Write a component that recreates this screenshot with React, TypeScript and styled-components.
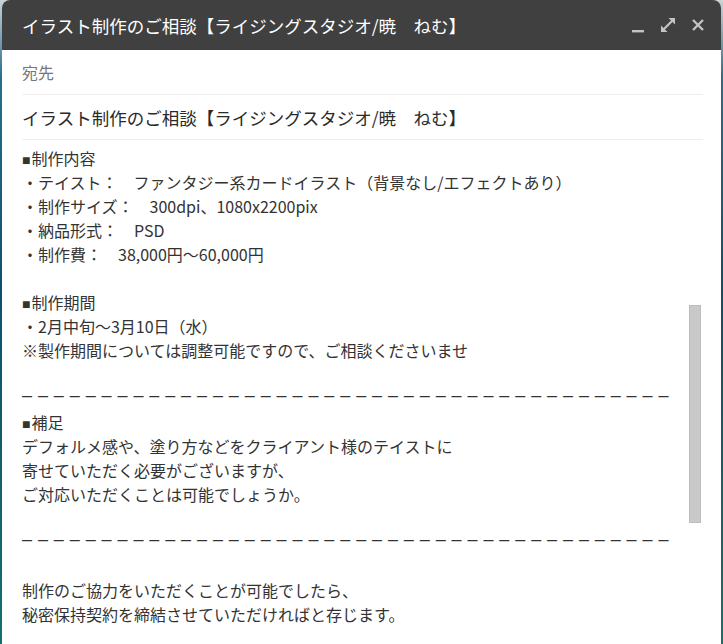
import React from 'react';
import styled, { createGlobalStyle } from 'styled-components';

const GlobalStyle = createGlobalStyle`
  html, body {
    margin: 0;
    padding: 0;
    height: 100%;
    overflow: hidden;
  }
  body {
    background: linear-gradient(180deg, #c9d3da 0%, #2a6d8c 12%, #0f4f6e 45%, #14706f 100%);
    font-family: "Noto Sans CJK JP", "Noto Sans", sans-serif;
  }
`;

const Desktop = styled.div`
  display: flex;
  height: 100vh;
  padding-left: 2px;
`;

const ComposeWindow = styled.section`
  width: 719px;
  height: 700px;
  display: flex;
  flex-direction: column;
  background: #fff;
  border-radius: 8px 8px 0 0;
  overflow: hidden;
`;

const TitleBar = styled.header`
  height: 50px;
  flex: none;
  display: flex;
  align-items: center;
  justify-content: space-between;
  padding: 0 14px 0 20px;
  background: #404040;
  color: #fff;
`;

const Title = styled.h1`
  margin: 0;
  font-size: 17.5px;
  font-weight: 400;
  white-space: nowrap;
`;

const WindowControls = styled.div`
  display: flex;
  align-items: center;
  gap: 12px;
`;

const ControlButton = styled.button`
  width: 18px;
  height: 18px;
  padding: 0;
  border: none;
  background: none;
  display: flex;
  align-items: center;
  justify-content: center;
  color: #c4c4c4;
`;

const FieldRow = styled.div<{ $muted?: boolean }>`
  flex: none;
  height: 44px;
  margin: 0 18px 0 20px;
  display: flex;
  align-items: center;
  border-bottom: 1px solid #efefef;
  font-size: ${p => (p.$muted ? '16px' : '17.5px')};
  color: ${p => (p.$muted ? '#777' : '#2a2a2a')};
  white-space: nowrap;
`;

const BodyArea = styled.div`
  position: relative;
  flex: 1;
  padding: 6px 18px 0 20px;
  overflow: hidden;
`;

const Line = styled.div`
  height: 24px;
  line-height: 24px;
  font-size: 16px;
  color: #333;
  white-space: pre;
`;

const Marker = styled.span`
  font-family: "Liberation Sans", sans-serif;
  font-size: 14px;
  margin-right: 1px;
`;

// separator lines typed as rows of dashes
const DashRule = styled.div`
  height: 24px;
  line-height: 18px;
  font-family: "Liberation Sans", sans-serif;
  font-size: 18px;
  letter-spacing: 5.9px;
  color: #333;
  white-space: pre;
`;

const ScrollThumb = styled.div`
  position: absolute;
  top: 165px;
  right: 20px;
  width: 12px;
  height: 218px;
  background: #c9c9c9;
  border: 1px solid #bdbdbd;
  box-sizing: border-box;
`;

type BodyLine = { text: string; heading?: boolean; rule?: boolean };

const bodyLines: BodyLine[] = [
  { text: '制作内容', heading: true },
  { text: '・テイスト：　ファンタジー系カードイラスト（背景なし/エフェクトあり）' },
  { text: '・制作サイズ：　300dpi、1080x2200pix' },
  { text: '・納品形式：　PSD' },
  { text: '・制作費：　38,000円～60,000円' },
  { text: '' },
  { text: '制作期間', heading: true },
  { text: '・2月中旬～3月10日（水）' },
  { text: '※製作期間については調整可能ですので、ご相談くださいませ' },
  { text: '' },
  { text: '–'.repeat(41), rule: true },
  { text: '補足', heading: true },
  { text: 'デフォルメ感や、塗り方などをクライアント様のテイストに' },
  { text: '寄せていただく必要がございますが、' },
  { text: 'ご対応いただくことは可能でしょうか。' },
  { text: '' },
  { text: '–'.repeat(41), rule: true },
  { text: '' },
  { text: '制作のご協力をいただくことが可能でしたら、' },
  { text: '秘密保持契約を締結させていただければと存じます。' },
  { text: '' },
];

const subject = 'イラスト制作のご相談【ライジングスタジオ/暁　ねむ】';

const App = () => (
  <>
    <GlobalStyle />
    <Desktop>
      <ComposeWindow>
        <TitleBar>
          <Title>{subject}</Title>
          <WindowControls>
            <ControlButton aria-label="最小化">
              <svg width="14" height="18" viewBox="0 0 14 18">
                <rect x="1" y="14" width="12" height="2.4" fill="currentColor" />
              </svg>
            </ControlButton>
            <ControlButton aria-label="全画面表示">
              <svg width="16" height="16" viewBox="0 0 16 16">
                <path d="M4 12 L12 4" stroke="currentColor" strokeWidth="2.2" />
                <path d="M15 1 V7.5 L8.5 1 Z" fill="currentColor" />
                <path d="M1 15 V8.5 L7.5 15 Z" fill="currentColor" />
              </svg>
            </ControlButton>
            <ControlButton aria-label="閉じる">
              <svg width="14" height="14" viewBox="0 0 14 14" stroke="currentColor" strokeWidth="2.4">
                <path d="M2 2 L12 12 M12 2 L2 12" />
              </svg>
            </ControlButton>
          </WindowControls>
        </TitleBar>
        <FieldRow $muted>宛先</FieldRow>
        <FieldRow>{subject}</FieldRow>
        <BodyArea>
          {bodyLines.map((line, i) =>
            line.rule ? (
              <DashRule key={i}>{line.text}</DashRule>
            ) : (
              <Line key={i}>
                {line.heading && <Marker>■</Marker>}
                {line.text}
              </Line>
            ),
          )}
          <ScrollThumb />
        </BodyArea>
      </ComposeWindow>
    </Desktop>
  </>
);

export default App;
